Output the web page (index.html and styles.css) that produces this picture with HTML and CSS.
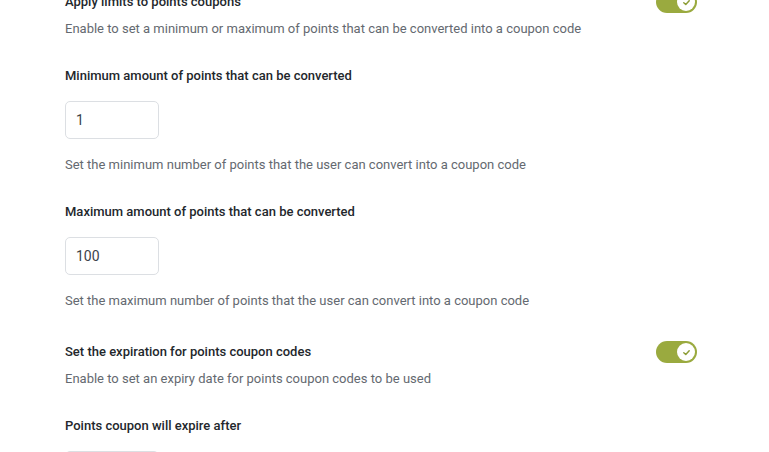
FILE: index.html
```html
<!DOCTYPE html>
<html>
<head>
<meta charset="utf-8">
<link rel="stylesheet" href="styles.css">
</head>
<body>
<div class="settings">
  <div class="option">
    <div class="head">
      <span class="label">Apply limits to points coupons</span>
      <span class="toggle"><span class="knob"><svg viewBox="0 0 10 10" width="9" height="9"><path d="M2 5.2 L4.2 7.2 L8 3" fill="none" stroke="#8c9c35" stroke-width="1.6" stroke-linecap="round" stroke-linejoin="round"/></svg></span></span>
    </div>
    <p class="desc tight">Enable to set a minimum or maximum of points that can be converted into a coupon code</p>
  </div>
  <div class="option">
    <div class="label">Minimum amount of points that can be converted</div>
    <input class="field" type="text" value="1">
    <p class="desc">Set the minimum number of points that the user can convert into a coupon code</p>
  </div>
  <div class="option">
    <div class="label">Maximum amount of points that can be converted</div>
    <input class="field" type="text" value="100">
    <p class="desc">Set the maximum number of points that the user can convert into a coupon code</p>
  </div>
  <div class="option spaced">
    <div class="head">
      <span class="label">Set the expiration for points coupon codes</span>
      <span class="toggle"><span class="knob"><svg viewBox="0 0 10 10" width="9" height="9"><path d="M2 5.2 L4.2 7.2 L8 3" fill="none" stroke="#8c9c35" stroke-width="1.6" stroke-linecap="round" stroke-linejoin="round"/></svg></span></span>
    </div>
    <p class="desc tight">Enable to set an expiry date for points coupon codes to be used</p>
  </div>
  <div class="option">
    <div class="label">Points coupon will expire after</div>
    <input class="field" type="text" value="">
  </div>
</div>
</body>
</html>
```
FILE: styles.css
```css
html, body {
  margin: 0;
  padding: 0;
  background: #ffffff;
}
body {
  font-family: Roboto, "Noto Sans", sans-serif;
  font-size: 13px;
  line-height: 20px;
  color: #1d2327;
  overflow: hidden;
}
.settings {
  width: 632px;
  margin: -8px 0 0 65px;
  display: flex;
  flex-direction: column;
  gap: 27px;
}
.option {
  display: flex;
  flex-direction: column;
}
.option.spaced {
  margin-top: 4px;
}
.head {
  display: flex;
  justify-content: space-between;
  align-items: center;
  height: 20px;
}
.label {
  font-weight: 500;
  color: #23272c;
}
.desc {
  margin: 16px 0 0;
  color: #646970;
}
.desc.tight {
  margin-top: 7px;
}
.field {
  box-sizing: border-box;
  width: 94px;
  height: 38px;
  margin-top: 15px;
  padding: 0 10px;
  border: 1px solid #dcdfe3;
  border-radius: 5px;
  font-family: inherit;
  font-size: 14px;
  color: #3c434a;
  outline: none;
  background: #fff;
}
.toggle {
  width: 41px;
  height: 22px;
  border-radius: 11px;
  background: #9aaa3f;
  display: flex;
  align-items: center;
  justify-content: flex-end;
  padding: 0 2px;
  box-sizing: border-box;
}
.knob {
  width: 18px;
  height: 18px;
  border-radius: 50%;
  background: #fff;
  display: flex;
  align-items: center;
  justify-content: center;
}
```
